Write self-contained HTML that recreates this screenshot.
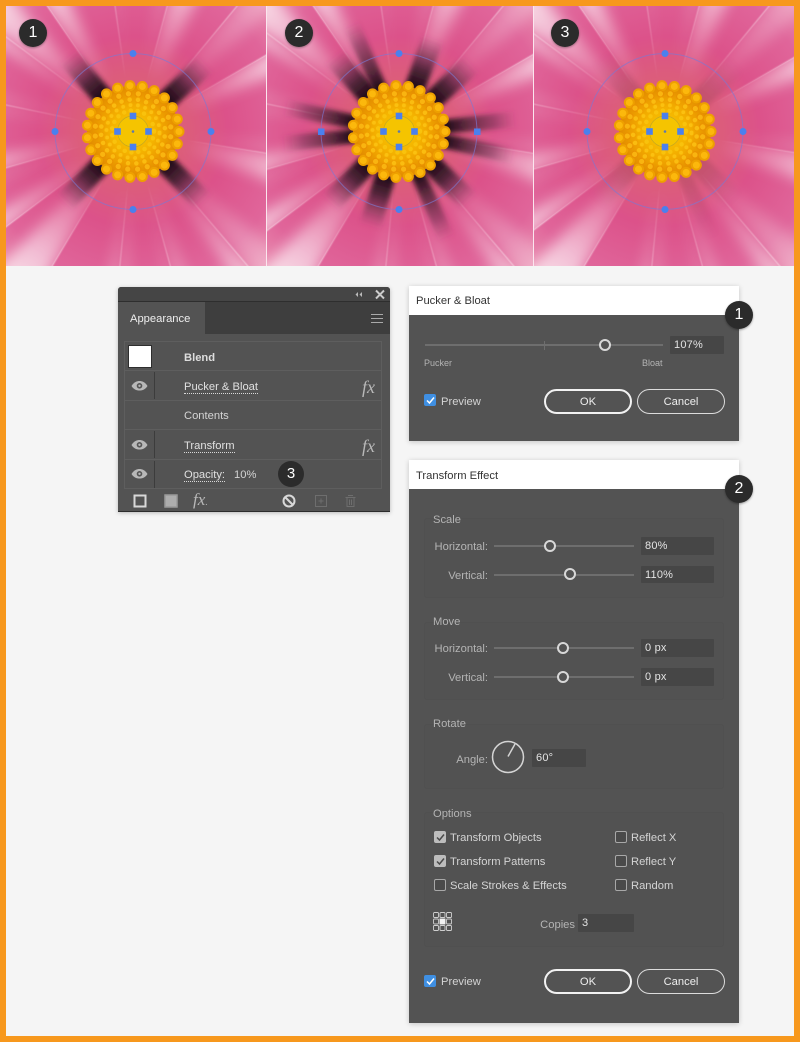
<!DOCTYPE html>
<html><head><meta charset="utf-8"><title>Appearance</title>
<style>
html,body{margin:0;padding:0}
body{width:800px;height:1042px;position:relative;overflow:hidden;background:#f5f5f5;font-family:"Liberation Sans",sans-serif}
.a{position:absolute}
.t{position:absolute;line-height:14px;font-size:11.2px;color:#d4d4d4;white-space:nowrap;margin-top:2px}
.r{text-align:right}
.l{color:#b4b4b4}
.inp{position:absolute;background:#464646;border-radius:1px;color:#e4e4e4;font-size:11px;line-height:19px;padding-left:4px;box-sizing:border-box;letter-spacing:.2px}
.tr{position:absolute;height:2px;background:#6e6e6e}
.th{position:absolute;width:12px;height:12px;border:2px solid #d8d8d8;border-radius:50%;background:#535353;box-sizing:border-box}
.btn{position:absolute;box-sizing:border-box;width:88px;height:25px;border-radius:13px;text-align:center;color:#eee;font-size:11.2px;line-height:23px;background:#535353}
.ok{border:2px solid #f2f2f2;font-weight:normal}
.can{border:1.5px solid #dcdcdc;line-height:24px}
.cb{position:absolute;width:12px;height:12px;box-sizing:border-box;border:1px solid #a8a8a8;border-radius:2px;background:#4a4a4a}
.cb.on{background:#bdbdbd;border-color:#bdbdbd}
.cb.bl{background:#3f8fe2;border-color:#3f8fe2}
.cb svg{position:absolute;left:0;top:0}
.badge{position:absolute;width:28px;height:28px;border-radius:50%;background:#2b2b2b;color:#fff;text-align:center;line-height:28px;font-size:16px;box-shadow:0 1px 2px rgba(0,0,0,.35)}
.grp{position:absolute;border:1px solid #505050;border-radius:3px;box-sizing:border-box;background:#525252}
.u{border-bottom:1px dotted #d8d8d8;padding-bottom:0}
.row{position:absolute;left:124px;width:258px;border-top:1px solid #5e5e5e;box-sizing:border-box}
.sep{position:absolute;left:154px;width:1px;background:#3c3c3c}
.fx{position:absolute;font-family:"Liberation Serif",serif;font-style:italic;font-size:18px;color:#b8b8b8;line-height:18px}
</style></head><body>

<svg class="a" style="left:0;top:0" width="800" height="268" viewBox="0 0 800 268">
<defs>
<radialGradient id="base" gradientUnits="userSpaceOnUse" cx="133" cy="131.5" r="190">
<stop offset="0" stop-color="#dc6a6c"/><stop offset=".3" stop-color="#dc5c7c"/><stop offset=".5" stop-color="#dc528a"/><stop offset=".8" stop-color="#e0659a"/><stop offset="1" stop-color="#e98cb0"/>
</radialGradient>
<radialGradient id="hl" gradientUnits="userSpaceOnUse" cx="133" cy="131.5" r="190">
<stop offset=".28" stop-color="#fff" stop-opacity="0"/><stop offset=".5" stop-color="#ffe8ee" stop-opacity=".4"/><stop offset=".8" stop-color="#fff" stop-opacity=".8"/><stop offset="1" stop-color="#fff" stop-opacity=".95"/>
</radialGradient>
<radialGradient id="disc" gradientUnits="userSpaceOnUse" cx="133" cy="131.5" r="47">
<stop offset="0" stop-color="#f7c800"/><stop offset=".45" stop-color="#f5b400"/><stop offset=".75" stop-color="#ec9c00"/><stop offset="1" stop-color="#e08800"/>
</radialGradient>
<filter id="b5" x="-50%" y="-50%" width="200%" height="200%"><feGaussianBlur stdDeviation="7"/></filter>
<filter id="b3" x="-50%" y="-150%" width="200%" height="400%"><feGaussianBlur stdDeviation="2.500"/></filter>
<filter id="b1" x="-20%" y="-20%" width="140%" height="140%"><feGaussianBlur stdDeviation=".5"/></filter>
<linearGradient id="dk" gradientUnits="userSpaceOnUse" x1="46" y1="0" x2="100" y2="0">
<stop offset="0" stop-color="#1c0f14"/><stop offset=".35" stop-color="#35162a" stop-opacity=".85"/><stop offset=".7" stop-color="#5a2a48" stop-opacity=".45"/><stop offset="1" stop-color="#7a3a5a" stop-opacity="0"/>
</linearGradient>
<linearGradient id="dk2" gradientUnits="userSpaceOnUse" x1="46" y1="0" x2="118" y2="0">
<stop offset="0" stop-color="#1c0f14"/><stop offset=".3" stop-color="#35162a" stop-opacity=".75"/><stop offset=".7" stop-color="#50263f" stop-opacity=".4"/><stop offset="1" stop-color="#7a3a5a" stop-opacity="0"/>
</linearGradient>
<path id="s" d="M44-10L102-11V11L44 10Z" fill="url(#dk)" filter="url(#b3)"/>
<path id="s2" d="M44-7L120-8V8L44 7Z" fill="url(#dk2)" filter="url(#b3)"/>

<clipPath id="p1"><path d="M133 131.5L-39-119.5H97Z"/></clipPath>
<clipPath id="p2"><path d="M133 131.5L97-119.5H201Z"/></clipPath>
<clipPath id="p3"><path d="M133 131.5L201-119.5H341Z"/></clipPath>
<clipPath id="p4"><path d="M133 131.5L341-119.5L399-21.5Z"/></clipPath>
<clipPath id="p5"><path d="M133 131.5L399-21.5V174.5Z"/></clipPath>
<clipPath id="p6"><path d="M133 131.5L399 174.5L361 398.5Z"/></clipPath>
<clipPath id="p7"><path d="M133 131.5L361 398.5H207Z"/></clipPath>
<clipPath id="p8"><path d="M133 131.5L207 398.5H107Z"/></clipPath>
<clipPath id="p9"><path d="M133 131.5L107 398.5H-27Z"/></clipPath>
<clipPath id="p10"><path d="M133 131.5L-27 398.5L-121 322.5Z"/></clipPath>
<clipPath id="p11"><path d="M133 131.5L-121 322.5V204.5Z"/></clipPath>
<clipPath id="p12"><path d="M133 131.5L-121 204.5V78.5Z"/></clipPath>
<clipPath id="p13"><path d="M133 131.5L-121 78.5V-57.5Z"/></clipPath>
<clipPath id="p14"><path d="M133 131.5L-121-57.5L-39-119.5Z"/></clipPath>

<g id="petals">
<rect x="-10" y="-10" width="300" height="300" fill="url(#base)"/>
<g fill="url(#hl)">
<g clip-path="url(#p1)"><path d="M133 131.5L-39-119.5H10Z" filter="url(#b5)" opacity=".8"/></g>
<g clip-path="url(#p2)"><path d="M133 131.5L201-119.5H178Z" filter="url(#b5)" opacity=".25"/><path d="M133 131.5L97-119.5H108Z" filter="url(#b5)" opacity=".2"/></g>
<g clip-path="url(#p3)"><path d="M133 131.5L201-119.5H255Z" filter="url(#b5)" opacity=".7"/></g>
<g clip-path="url(#p4)"><path d="M133 131.5L341-119.5L368-74Z" filter="url(#b5)" opacity=".3"/></g>
<g clip-path="url(#p5)"><path d="M133 131.5L399-21.5V25Z" filter="url(#b5)" opacity=".8"/><path d="M133 131.5L399 174.5V150Z" filter="url(#b5)" opacity=".25"/></g>
<g clip-path="url(#p6)"><path d="M133 131.5L399 174.5L392 225Z" filter="url(#b5)" opacity=".7"/><path d="M133 131.5L361 398.5L372 330Z" filter="url(#b5)" opacity=".3"/></g>
<g clip-path="url(#p7)"><path d="M133 131.5L361 398.5H318Z" filter="url(#b5)" opacity=".5"/><path d="M133 131.5L207 398.5H235Z" filter="url(#b5)" opacity=".35"/></g>
<g clip-path="url(#p8)"><path d="M133 131.5L207 398.5H190Z" filter="url(#b5)" opacity=".2"/><path d="M133 131.5L107 398.5H125Z" filter="url(#b5)" opacity=".35"/></g>
<g clip-path="url(#p9)"><path d="M133 131.5L107 398.5H88Z" filter="url(#b5)" opacity=".4"/></g>
<g clip-path="url(#p10)"><path d="M133 131.5L-27 398.5L-85 352Z" filter="url(#b5)" opacity=".7"/></g>
<g clip-path="url(#p11)"><path d="M133 131.5L-121 322.5V285Z" filter="url(#b5)" opacity=".75"/><path d="M133 131.5L-121 204.5V225Z" filter="url(#b5)" opacity=".2"/></g>
<g clip-path="url(#p12)"><path d="M133 131.5L-121 204.5V175Z" filter="url(#b5)" opacity=".8"/><path d="M133 131.5L-121 78.5V98Z" filter="url(#b5)" opacity=".25"/></g>
<g clip-path="url(#p13)"><path d="M133 131.5L-121 78.5V60Z" filter="url(#b5)" opacity=".3"/><path d="M133 131.5L-121-57.5V-30Z" filter="url(#b5)" opacity=".7"/></g>
<g clip-path="url(#p14)"><path d="M133 131.5L-121-57.5L-75-95Z" filter="url(#b5)" opacity=".7"/></g>
</g>
<g stroke="url(#hl)" stroke-width="1" opacity=".6" filter="url(#b1)" fill="none">
<path d="M133 131.5L-39-119.5M133 131.5L97-119.5M133 131.5L201-119.5M133 131.5L341-119.5M133 131.5L399-21.5M133 131.5L399 174.5M133 131.5L361 398.5M133 131.5L207 398.5M133 131.5L107 398.5M133 131.5L-27 398.5M133 131.5L-121 322.5M133 131.5L-121 204.5M133 131.5L-121 78.5M133 131.5L-121-57.5"/>
</g>
</g>

<g id="head">
<circle cx="133" cy="131.5" r="46" fill="url(#disc)"/>
<g fill="none" stroke-linecap="round">
<circle cx="133" cy="131.5" r="46" pathLength="23" stroke-dasharray="0 1" stroke-width="11" stroke="#eea000"/>
<circle cx="133" cy="131.5" r="46" pathLength="23" stroke-dasharray="0 1" stroke-width="7" stroke="#fcb80c"/>
<circle cx="133" cy="131.5" r="38" pathLength="24" stroke-dasharray="0 1" stroke-width="7.500" stroke="#ea9200" transform="rotate(8 133 131.5)"/>
<circle cx="133" cy="131.5" r="38" pathLength="24" stroke-dasharray="0 1" stroke-width="5.200" stroke="#f9b410" transform="rotate(8 133 131.5)"/>
<circle cx="133" cy="131.5" r="32" pathLength="24" stroke-dasharray="0 1" stroke-width="6.500" stroke="#f0a000" transform="rotate(-6 133 131.5)"/>
<circle cx="133" cy="131.5" r="32" pathLength="24" stroke-dasharray="0 1" stroke-width="4.500" stroke="#fabc10" transform="rotate(-6 133 131.5)"/>
<circle cx="133" cy="131.5" r="26.500" pathLength="22" stroke-dasharray="0 1" stroke-width="5.500" stroke="#f5ae00" transform="rotate(4 133 131.5)"/>
<circle cx="133" cy="131.5" r="26.500" pathLength="22" stroke-dasharray="0 1" stroke-width="3.800" stroke="#fbc010" transform="rotate(4 133 131.5)"/>
<circle cx="133" cy="131.5" r="21" pathLength="19" stroke-dasharray="0 1" stroke-width="4.500" stroke="#f9c20c"/>
</g>
<circle cx="133" cy="131.5" r="16" fill="#f5c400"/>
<circle cx="133" cy="131.5" r="15.500" fill="none" stroke="#b09a30" stroke-width=".7" opacity=".7"/>
<circle cx="133" cy="131.5" r="78" fill="none" stroke="#7c78d2" stroke-width="1" opacity=".65"/>
<g fill="#4a80ee">
<rect x="129.700" y="112.700" width="6.600" height="6.600"/><rect x="129.700" y="143.700" width="6.600" height="6.600"/><rect x="114.200" y="128.200" width="6.600" height="6.600"/><rect x="145.200" y="128.200" width="6.600" height="6.600"/>
<circle cx="133" cy="131.5" r="1.300" fill="#5a78b0"/>
<circle cx="133" cy="53.500" r="3.500"/><circle cx="133" cy="209.500" r="3.500"/>
</g>
</g>

<clipPath id="c1"><rect x="6" y="6" width="260" height="260"/></clipPath>
<clipPath id="c2"><rect x="267" y="6" width="266" height="260"/></clipPath>
<clipPath id="c3"><rect x="534" y="6" width="260" height="260"/></clipPath>
</defs>

<!-- Panel 1 -->
<g clip-path="url(#c1)">
<use href="#petals"/>
<g transform="translate(133 131.5)">
<use href="#s" transform="rotate(229)"/><use href="#s" transform="rotate(317)"/><use href="#s" transform="rotate(134)"/><use href="#s" transform="rotate(45)"/>
</g>
<use href="#head"/>
<g fill="#4a80ee"><circle cx="55" cy="131.5" r="3.5"/><circle cx="211" cy="131.5" r="3.5"/></g>
</g>

<!-- Panel 2 -->
<g clip-path="url(#c2)">
<g transform="translate(266 0)">
<use href="#petals"/>
<g transform="translate(133 131.5)">
<use href="#s" transform="rotate(229)"/><use href="#s" transform="rotate(317)"/><use href="#s" transform="rotate(134)"/><use href="#s" transform="rotate(45)"/>
<use href="#s2" transform="rotate(246)"/><use href="#s" transform="rotate(290)"/><use href="#s2" transform="rotate(174)"/><use href="#s2" transform="rotate(192)"/><use href="#s2" transform="rotate(354)"/><use href="#s2" transform="rotate(12)"/><use href="#s" transform="rotate(107)"/><use href="#s2" transform="rotate(66)"/>
</g>
<use href="#head"/>
<g fill="#4a80ee"><rect x="52" y="128.5" width="6.500" height="6.500"/><rect x="208" y="128.5" width="6.500" height="6.500"/></g>
</g>
</g>

<!-- Panel 3 -->
<g clip-path="url(#c3)">
<g transform="translate(532 0)">
<use href="#petals"/>
<g transform="translate(133 131.5)" opacity=".13">
<use href="#s" transform="rotate(229)"/><use href="#s" transform="rotate(317)"/><use href="#s" transform="rotate(134)"/><use href="#s" transform="rotate(45)"/>
<use href="#s2" transform="rotate(66)"/>
</g>
<use href="#head"/>
<g fill="#4a80ee"><circle cx="55" cy="131.5" r="3.5"/><circle cx="211" cy="131.5" r="3.5"/></g>
</g>
</g>
<rect x="266" y="6" width="1" height="260" fill="#fbe6ee"/>
<rect x="533" y="6" width="1" height="260" fill="#fbe6ee"/>
</svg>

<div class="badge" style="left:19px;top:19px">1</div>
<div class="badge" style="left:285px;top:19px">2</div>
<div class="badge" style="left:551px;top:19px">3</div>

<!-- Appearance panel -->
<div class="a" style="left:118px;top:287px;width:272px;height:225px;background:#535353;border-radius:3px 3px 0 0;box-shadow:0 1px 4px rgba(0,0,0,.25);border-bottom:1px solid #2c2c2c;box-sizing:border-box"></div>
<div class="a" style="left:118px;top:287px;width:272px;height:15px;background:#454545;border-bottom:1px solid #2e2e2e;border-radius:3px 3px 0 0;box-sizing:border-box"></div>
<div class="a" style="left:118px;top:302px;width:272px;height:32px;background:#3e3e3e"></div>
<div class="a" style="left:118px;top:302px;width:87px;height:32px;background:#535353"></div>
<div class="t" style="left:130px;top:310px;color:#eee">Appearance</div>
<svg class="a" style="left:352px;top:288px" width="36" height="14" viewBox="0 0 36 14">
<path d="M6 4L3.500 6.500L6 9ZM10 4L7.500 6.500L10 9Z" fill="#bbb"/>
<path d="M24 2.500L32 10.500M32 2.500L24 10.500" stroke="#ccc" stroke-width="2"/>
</svg>
<div class="a" style="left:371px;top:314px;width:12px;height:1px;background:#aaa"></div>
<div class="a" style="left:371px;top:318px;width:12px;height:1px;background:#aaa"></div>
<div class="a" style="left:371px;top:322px;width:12px;height:1px;background:#aaa"></div>

<div class="a" style="left:124px;top:341px;width:258px;height:148px;border:1px solid #5e5e5e;box-sizing:border-box"></div>
<div class="row" style="top:370px"></div><div class="row" style="top:400px"></div><div class="row" style="top:429px"></div><div class="row" style="top:459px"></div>
<div class="a" style="left:128px;top:345px;width:24px;height:23px;background:#fff;border:1px solid #2e2e2e;box-sizing:border-box"></div>
<div class="sep" style="top:372px;height:27px"></div>
<div class="sep" style="top:431px;height:27px"></div>
<div class="sep" style="top:461px;height:27px"></div>
<svg class="a" style="left:130px;top:378px" width="20" height="14" viewBox="0 0 20 14"><path d="M1.500 8C4 4 7 3 9.500 3S15 4 17.500 8C15 12 12 12.500 9.500 12.500S4 12 1.500 8Z" fill="#b8b8b8"/><circle cx="9.500" cy="7.800" r="2.800" fill="#555"/><circle cx="9.500" cy="7.800" r="1.200" fill="#b8b8b8"/></svg>
<svg class="a" style="left:130px;top:437px" width="20" height="14" viewBox="0 0 20 14"><path d="M1.500 8C4 4 7 3 9.500 3S15 4 17.500 8C15 12 12 12.500 9.500 12.500S4 12 1.500 8Z" fill="#b8b8b8"/><circle cx="9.500" cy="7.800" r="2.800" fill="#555"/><circle cx="9.500" cy="7.800" r="1.200" fill="#b8b8b8"/></svg>
<svg class="a" style="left:130px;top:466px" width="20" height="14" viewBox="0 0 20 14"><path d="M1.500 8C4 4 7 3 9.500 3S15 4 17.500 8C15 12 12 12.500 9.500 12.500S4 12 1.500 8Z" fill="#b8b8b8"/><circle cx="9.500" cy="7.800" r="2.800" fill="#555"/><circle cx="9.500" cy="7.800" r="1.200" fill="#b8b8b8"/></svg>

<div class="t" style="left:184px;top:349px;font-weight:bold;color:#ddd">Blend</div>
<div class="t" style="left:184px;top:378px;color:#e0e0e0"><span class="u">Pucker &amp; Bloat</span></div>
<div class="t" style="left:184px;top:407px">Contents</div>
<div class="t" style="left:184px;top:437px;color:#e0e0e0"><span class="u">Transform</span></div>
<div class="t" style="left:184px;top:466px;color:#e0e0e0"><span class="u">Opacity:</span></div>
<div class="t" style="left:234px;top:466px">10%</div>
<div class="fx" style="left:362px;top:378px">fx</div>
<div class="fx" style="left:362px;top:437px">fx</div>
<div class="badge" style="left:278px;top:461px;width:26px;height:26px;line-height:26px;box-shadow:none;font-size:15px">3</div>

<svg class="a" style="left:128px;top:490px" width="240" height="22" viewBox="0 0 240 22">
<rect x="6.500" y="5.500" width="11" height="11" fill="none" stroke="#d8d8d8" stroke-width="2"/>
<rect x="37" y="5" width="12" height="12" fill="#adadad" stroke="#999" stroke-width="1.500"/>
<circle cx="161" cy="11" r="5.500" fill="none" stroke="#d8d8d8" stroke-width="2"/>
<path d="M157 7L165 15" stroke="#d8d8d8" stroke-width="2"/>
<rect x="187.500" y="5.500" width="11" height="11" fill="none" stroke="#6e6e6e"/>
<path d="M193 8.500V13.500M190.500 11H195.500" stroke="#6e6e6e"/>
<path d="M217.500 7.500H227.500M220 5.500H225M219 8V16.500H226V8M221.500 9.500V15M223.500 9.500V15" fill="none" stroke="#6e6e6e"/>
</svg>
<div class="fx" style="left:193px;top:491px;font-size:17px">fx<span style="font-size:9px;font-style:normal">.</span></div>

<!-- Pucker & Bloat dialog -->
<div class="a" style="left:409px;top:286px;width:330px;height:155px;background:#535353;box-shadow:0 1px 5px rgba(0,0,0,.2)"></div>
<div class="a" style="left:409px;top:286px;width:330px;height:29px;background:#fff"></div>
<div class="t" style="left:416px;top:292px;color:#333">Pucker &amp; Bloat</div>
<div class="tr" style="left:425px;top:344px;width:238px"></div>
<div class="a" style="left:544px;top:341px;width:1px;height:9px;background:#6e6e6e"></div>
<div class="th" style="left:599px;top:339px"></div>
<div class="inp" style="left:670px;top:336px;width:54px;height:18px">107%</div>
<div class="t l" style="left:424px;top:354px;font-size:9px">Pucker</div>
<div class="t l" style="left:642px;top:354px;font-size:9px">Bloat</div>
<div class="cb bl" style="left:424px;top:394px"><svg width="11" height="11" viewBox="0 0 11 11"><path d="M2 5.500L4.500 8L9 2.500" fill="none" stroke="#fff" stroke-width="1.500"/></svg></div>
<div class="t" style="left:441px;top:393px">Preview</div>
<div class="btn ok" style="left:544px;top:389px">OK</div>
<div class="btn can" style="left:637px;top:389px">Cancel</div>
<div class="badge" style="left:725px;top:301px">1</div>

<!-- Transform dialog -->
<div class="a" style="left:409px;top:460px;width:330px;height:563px;background:#535353;box-shadow:0 1px 5px rgba(0,0,0,.2)"></div>
<div class="a" style="left:409px;top:460px;width:330px;height:29px;background:#fff"></div>
<div class="t" style="left:416px;top:467px;color:#333">Transform Effect</div>
<div class="badge" style="left:725px;top:475px">2</div>

<div class="grp" style="left:424px;top:518px;width:300px;height:80px"></div>
<div class="grp" style="left:424px;top:622px;width:300px;height:78px"></div>
<div class="grp" style="left:424px;top:724px;width:300px;height:65px"></div>
<div class="grp" style="left:424px;top:812px;width:300px;height:135px"></div>

<div class="t l" style="left:433px;top:511px">Scale</div>
<div class="t l r" style="left:420px;width:68px;top:538px">Horizontal:</div>
<div class="tr" style="left:494px;top:545px;width:140px"></div>
<div class="th" style="left:544px;top:540px"></div>
<div class="inp" style="left:641px;top:537px;width:73px;height:18px">80%</div>
<div class="t l r" style="left:420px;width:68px;top:567px">Vertical:</div>
<div class="tr" style="left:494px;top:574px;width:140px"></div>
<div class="th" style="left:564px;top:568px"></div>
<div class="inp" style="left:641px;top:566px;width:73px;height:17px">110%</div>

<div class="t l" style="left:433px;top:613px">Move</div>
<div class="t l r" style="left:420px;width:68px;top:640px">Horizontal:</div>
<div class="tr" style="left:494px;top:647px;width:140px"></div>
<div class="th" style="left:557px;top:642px"></div>
<div class="inp" style="left:641px;top:639px;width:73px;height:18px">0 px</div>
<div class="t l r" style="left:420px;width:68px;top:669px">Vertical:</div>
<div class="tr" style="left:494px;top:676px;width:140px"></div>
<div class="th" style="left:557px;top:671px"></div>
<div class="inp" style="left:641px;top:668px;width:73px;height:18px">0 px</div>

<div class="t l" style="left:433px;top:715px">Rotate</div>
<div class="t l r" style="left:420px;width:68px;top:751px">Angle:</div>
<svg class="a" style="left:490px;top:739px" width="36" height="36" viewBox="0 0 36 36"><circle cx="18" cy="18" r="15.500" fill="none" stroke="#d4d4d4" stroke-width="1.500"/><path d="M18 17.500L25 5" stroke="#d4d4d4" stroke-width="1.500"/></svg>
<div class="inp" style="left:532px;top:749px;width:54px;height:18px">60°</div>

<div class="t l" style="left:433px;top:805px">Options</div>
<div class="cb on" style="left:434px;top:831px"><svg width="11" height="11" viewBox="0 0 11 11"><path d="M2 5.500L4.500 8L9 2.500" fill="none" stroke="#4a4a4a" stroke-width="1.500"/></svg></div>
<div class="t" style="left:450px;top:829px">Transform Objects</div>
<div class="cb on" style="left:434px;top:855px"><svg width="11" height="11" viewBox="0 0 11 11"><path d="M2 5.500L4.500 8L9 2.500" fill="none" stroke="#4a4a4a" stroke-width="1.500"/></svg></div>
<div class="t" style="left:450px;top:853px">Transform Patterns</div>
<div class="cb" style="left:434px;top:879px"></div>
<div class="t" style="left:450px;top:877px">Scale Strokes &amp; Effects</div>
<div class="cb" style="left:615px;top:831px"></div>
<div class="t" style="left:631px;top:829px">Reflect X</div>
<div class="cb" style="left:615px;top:855px"></div>
<div class="t" style="left:631px;top:853px">Reflect Y</div>
<div class="cb" style="left:615px;top:879px"></div>
<div class="t" style="left:631px;top:877px">Random</div>

<svg class="a" style="left:433px;top:912px" width="20" height="20" viewBox="0 0 20 20" fill="none" stroke="#cfcfcf" stroke-width=".9">
<rect x=".5" y=".5" width="5" height="5" rx="1"/><rect x="7" y=".5" width="5" height="5" rx="1"/><rect x="13.500" y=".5" width="5" height="5" rx="1"/>
<rect x=".5" y="7" width="5" height="5" rx="1"/><rect x="7" y="7" width="5" height="5" fill="#f2f2f2" stroke="#f2f2f2"/><rect x="13.500" y="7" width="5" height="5" rx="1"/>
<rect x=".5" y="13.500" width="5" height="5" rx="1"/><rect x="7" y="13.500" width="5" height="5" rx="1"/><rect x="13.500" y="13.500" width="5" height="5" rx="1"/>
</svg>
<div class="t l r" style="left:520px;width:55px;top:916px">Copies</div>
<div class="inp" style="left:578px;top:914px;width:56px;height:18px">3</div>

<div class="cb bl" style="left:424px;top:975px"><svg width="11" height="11" viewBox="0 0 11 11"><path d="M2 5.500L4.500 8L9 2.500" fill="none" stroke="#fff" stroke-width="1.500"/></svg></div>
<div class="t" style="left:441px;top:973px">Preview</div>
<div class="btn ok" style="left:544px;top:969px">OK</div>
<div class="btn can" style="left:637px;top:969px">Cancel</div>

<!-- Orange frame -->
<div class="a" style="left:0;top:0;width:800px;height:1042px;box-sizing:border-box;border:6px solid #f7981d"></div>
</body></html>
